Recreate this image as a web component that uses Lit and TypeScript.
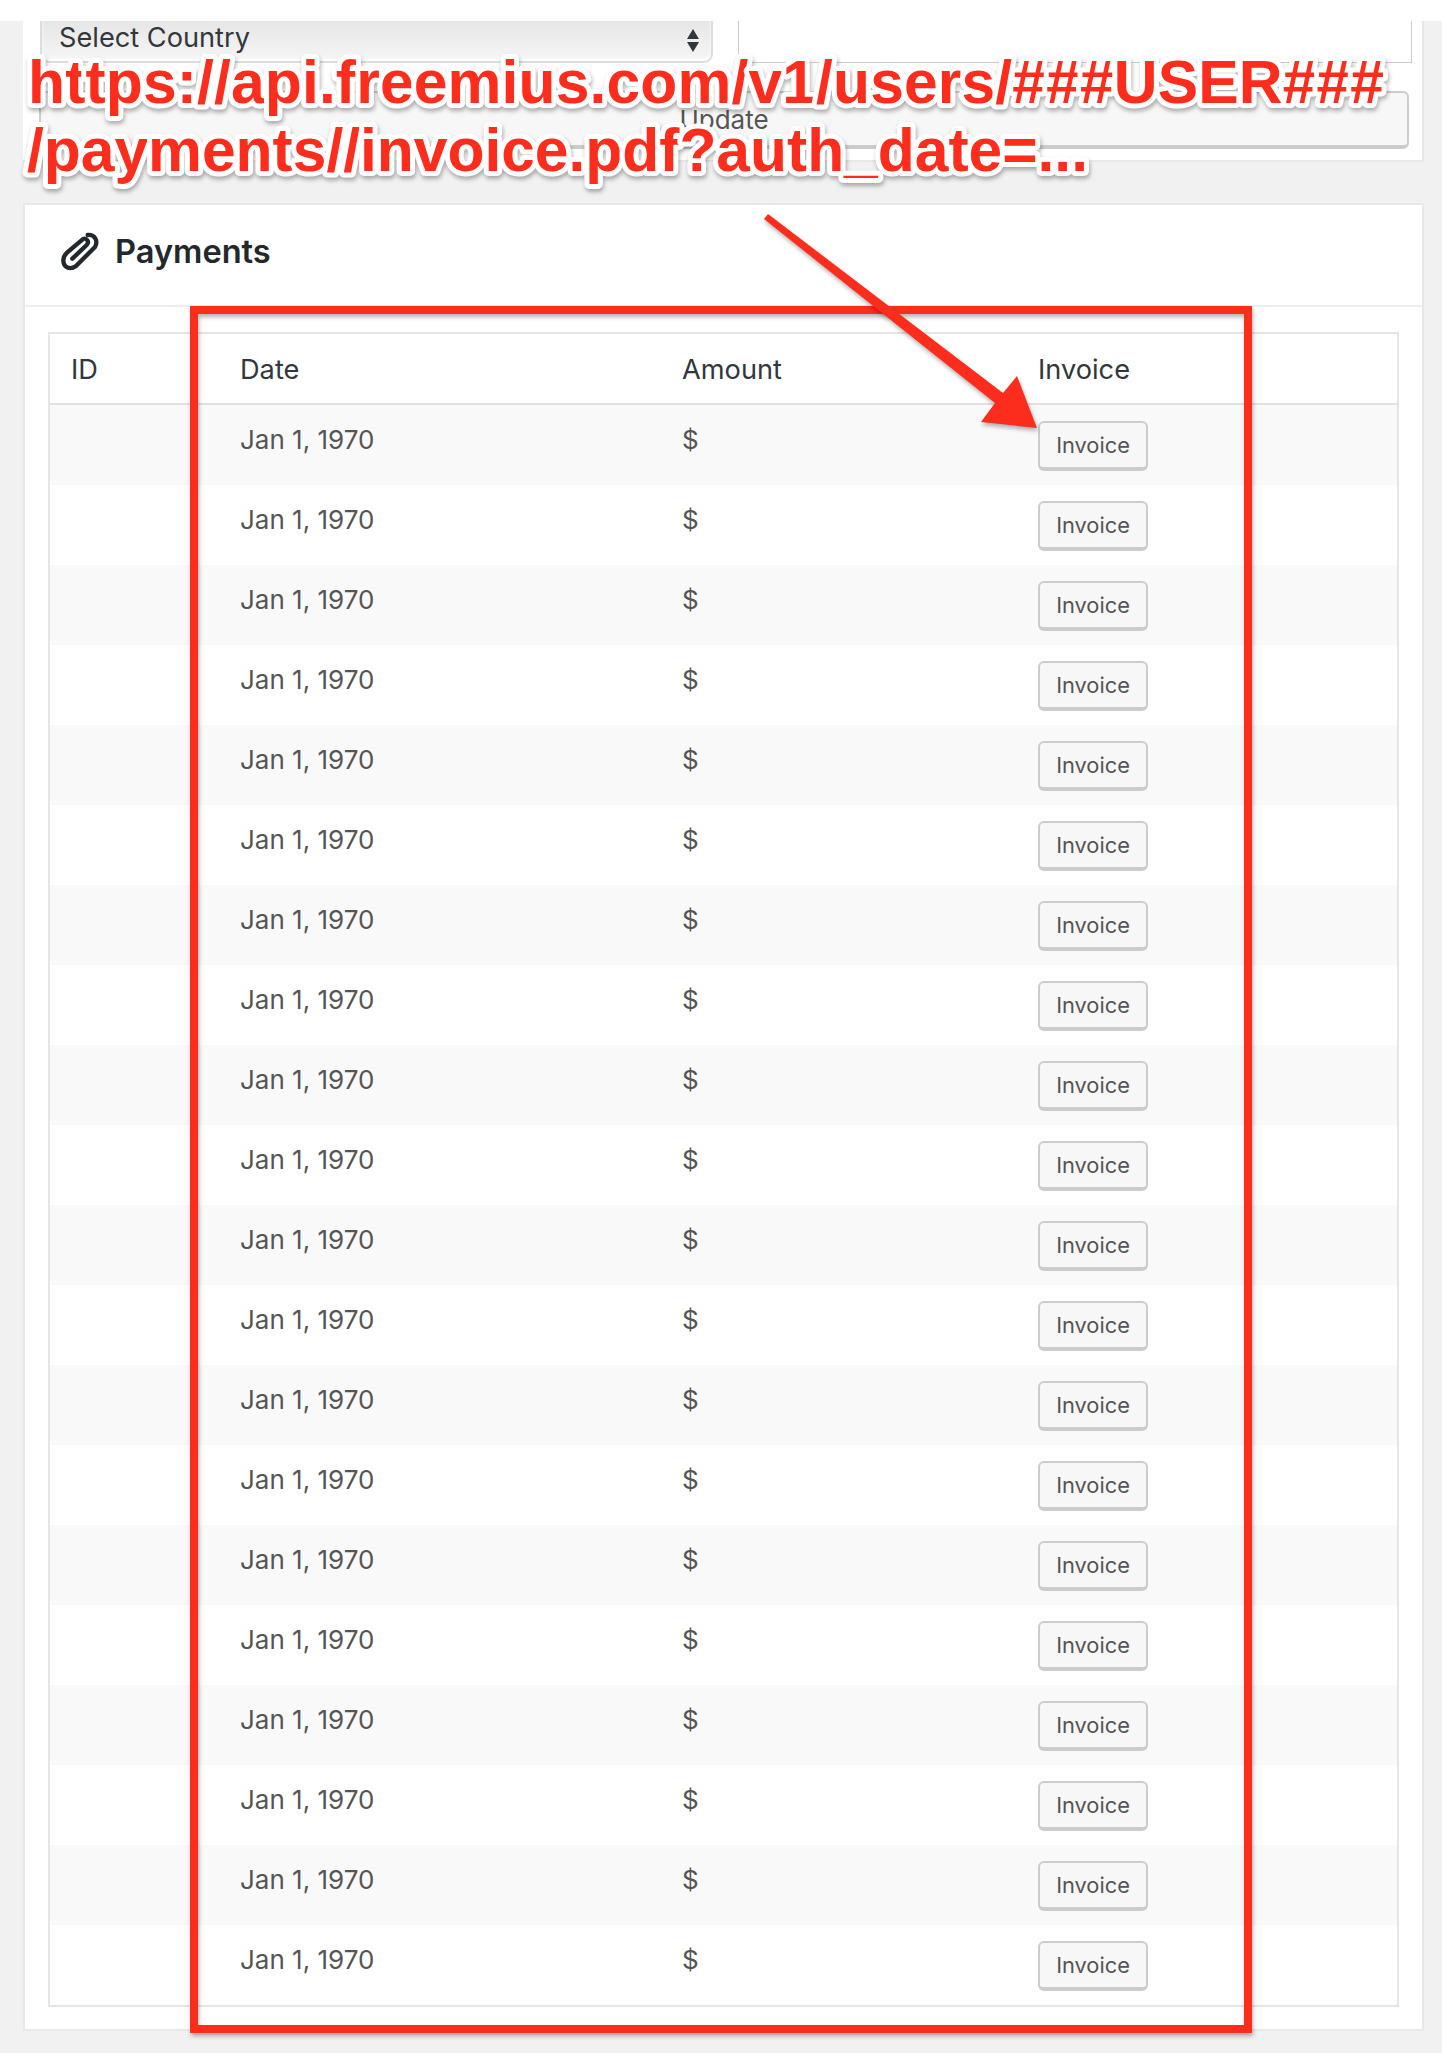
import { LitElement, html, css, svg } from "lit";
import { customElement } from "lit/decorators.js";

const rows = Array.from({ length: 20 }, (_, i) => i);

@customElement("app-root")
export class AppRoot extends LitElement {
  static styles = css`
    :host { display: block; position: relative; width: 1442px; height: 2053px; overflow: hidden; background: #f1f1f1; font-family: Inter, "Liberation Sans", sans-serif; color: #23282d; }
    .top { height: 21px; background: #fff; }
    .card { background: #fff; margin: 0 18px 0 23px; border: 2px solid #e8e8e8; box-sizing: border-box; }
    .card1 { height: 141px; border-top: 0; border-left: 0; padding: 0 12px 0 17px; }
    .form-row { display: flex; gap: 25px; height: 42px; }
    .select { width: 673px; box-sizing: border-box; flex: none; display: flex; align-items: center; justify-content: space-between; padding: 0 12px 7px 17px; font-size: 27.2px; color: #32373c; background: linear-gradient(#e6e6e6, #f6f6f6); border: 2px solid #ddd; border-top: 0; border-radius: 0 0 9px 9px; box-shadow: inset 0 -2px 3px #fff; }
    .spin { display: flex; flex-direction: column; gap: 3px; padding-top: 5px; }
    .up { width: 0; height: 0; border: 6px solid transparent; border-top: 0; border-bottom: 10px solid #32373c; }
    .down { width: 0; height: 0; border: 6px solid transparent; border-bottom: 0; border-top: 10px solid #32373c; }
    .box { width: 674px; box-sizing: border-box; border: 1px solid #ccc; border-top: 0; flex: none; }
    .update { margin: 28px 0 0 -1px; width: 1370px; height: 58px; box-sizing: border-box; background: #f7f7f7; border: 2px solid #ccc; border-bottom: 4px solid #ccc; border-radius: 6px; text-align: center; font-size: 26px; line-height: 53px; color: #555; }
    .card2 { height: 1828px; margin-top: 41px; }
    .head { height: 102px; box-sizing: border-box; border-bottom: 2px solid #eee; display: flex; align-items: center; gap: 15px; padding-left: 35px; padding-bottom: 8px; font-size: 32.6px; font-weight: 600; }
    .icon { width: 40px; height: 40px; flex: none; fill: none; stroke: #23282d; stroke-width: 13; stroke-linecap: round; stroke-linejoin: round; }
    .wrap { padding: 25px 23px 0 23px; }
    table { width: 1351px; border: 2px solid #e5e5e5; border-collapse: separate; border-spacing: 0; table-layout: fixed; }
    .c-id { width: 169px; } .c-date { width: 442px; } .c-amt { width: 356px; }
    th { height: 71px; text-align: left; font-weight: 400; font-size: 27.2px; padding: 2px 21px 0; border-bottom: 2px solid #e1e1e1; color: #32373c; box-sizing: border-box; }
    td { height: 80px; box-sizing: border-box; padding: 20px 21px 0; vertical-align: top; font-size: 26px; line-height: 30px; color: #555; }
    td.b { padding-top: 16px; }
    tr.odd td { background: #f9f9f9; }
    .btn { display: block; width: 110px; height: 50px; box-sizing: border-box; background: #f7f7f7; border: 2px solid #ccc; border-bottom-width: 4px; border-radius: 6px; text-align: center; font-size: 21.8px; line-height: 44px; color: #555; }
    .overlay { position: absolute; left: 0; top: 0; pointer-events: none; }
    .shadow { filter: drop-shadow(1px 3px 2px rgba(0,0,0,.3)); }
    .label { font: bold 60.6px "Liberation Sans", Arial, sans-serif; fill: #fc2d1c; stroke: #fff; stroke-width: 10px; paint-order: stroke fill; stroke-linejoin: round; }
    .rect { fill: none; stroke: #fc2d1c; stroke-width: 8; }
    .arrow { fill: #fc2d1c; }
  `;

  render() {
    return html`
      <div class="top"></div>
      <div class="card card1">
        <div class="form-row">
          <div class="select"><span>Select Country</span><span class="spin"><i class="up"></i><i class="down"></i></span></div>
          <div class="box"></div>
        </div>
        <div class="update">Update</div>
      </div>
      <div class="card card2">
        <div class="head">
          <svg class="icon" viewBox="60 60 120 120"><path d="M143 72C165 70 175 90 165 108L108 165C90 178 70 170 70 148C70 138 75 130 82 124L128 85C138 78 150 92 140 102L97 143"/></svg>
          <span>Payments</span>
        </div>
        <div class="wrap">
          <table>
            <colgroup><col class="c-id" /><col class="c-date" /><col class="c-amt" /><col /></colgroup>
            <thead><tr><th>ID</th><th>Date</th><th>Amount</th><th>Invoice</th></tr></thead>
            <tbody>
              ${rows.map((i) => html`<tr class=${i % 2 === 0 ? "odd" : ""}>
                <td></td><td>Jan 1, 1970</td><td>$</td><td class="b"><span class="btn">Invoice</span></td>
              </tr>`)}
            </tbody>
          </table>
        </div>
      </div>
      <svg class="overlay" width="1442" height="2053" viewBox="0 0 1442 2053">
        ${svg`<rect class="rect shadow" x="194" y="310" width="1054" height="1719"/>
        <polygon class="arrow shadow" points="768,214 764,219 995,403 981,422 1037,428 1017,376 1003,393"/>
        <g class="shadow">
          <text class="label" x="28" y="103" textLength="1356" lengthAdjust="spacing">https://api.freemius.com/v1/users/###USER###</text>
          <text class="label" x="27" y="171" textLength="1061" lengthAdjust="spacing">/payments//invoice.pdf?auth_date=...</text>
        </g>`}
      </svg>
    `;
  }
}
